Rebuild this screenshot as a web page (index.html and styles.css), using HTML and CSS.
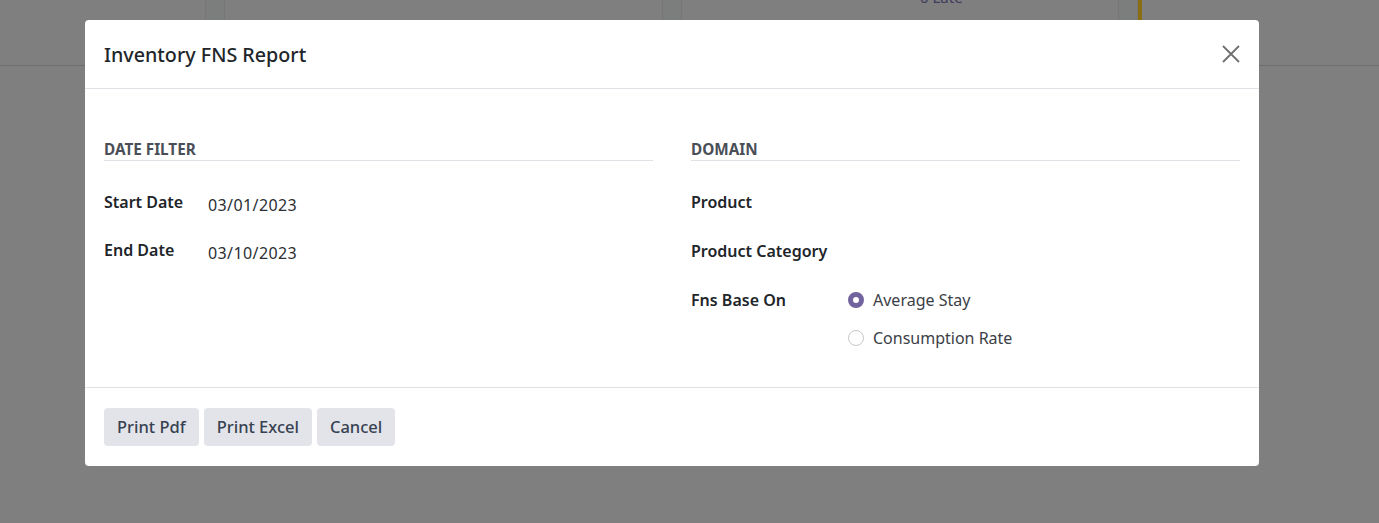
FILE: index.html
```html
<!DOCTYPE html>
<html>
<head>
<meta charset="utf-8">
<link rel="stylesheet" href="styles.css">
</head>
<body>
<div class="page">
  <div class="strip">
    <div class="cell c1"></div>
    <div class="gutter"></div>
    <div class="cell c2"></div>
    <div class="gutter"></div>
    <div class="cell c3"><span class="late">0 Late</span></div>
    <div class="gutter"></div>
    <div class="gold"></div>
    <div class="cell c4"></div>
  </div>
</div>

<div class="modal">
  <header class="modal-header">
    <h4 class="modal-title">Inventory FNS Report</h4>
    <button class="close" aria-label="Close">
      <svg width="20" height="20" viewBox="0 0 20 20"><path d="M2 2 L18 18 M18 2 L2 18" stroke="#6f6f6f" stroke-width="1.8" fill="none"/></svg>
    </button>
  </header>
  <main class="modal-body">
    <section class="group">
      <div class="group-title">Date Filter</div>
      <div class="rows rows-left">
        <div class="row"><div class="label lbl-left">Start Date</div><div class="value">03/01/2023</div></div>
        <div class="row"><div class="label lbl-left">End Date</div><div class="value">03/10/2023</div></div>
      </div>
    </section>
    <section class="group">
      <div class="group-title">Domain</div>
      <div class="rows rows-right">
        <div class="row"><div class="label lbl-right">Product</div></div>
        <div class="row"><div class="label lbl-right">Product Category</div></div>
        <div class="row"><div class="label lbl-right">Fns Base On</div>
          <div class="radios">
            <div class="radio-item"><span class="radio checked"></span><span>Average Stay</span></div>
            <div class="radio-item"><span class="radio"></span><span>Consumption Rate</span></div>
          </div>
        </div>
      </div>
    </section>
  </main>
  <footer class="modal-footer">
    <button class="btn">Print Pdf</button>
    <button class="btn">Print Excel</button>
    <button class="btn">Cancel</button>
  </footer>
</div>
</body>
</html>
```

FILE: styles.css
```css
html, body {
  margin: 0;
  padding: 0;
}
body {
  width: 1379px;
  height: 523px;
  background: #7f7f7f;
  font-family: "Noto Sans", "Open Sans", sans-serif;
  overflow: hidden;
}
.page {
  height: 523px;
}
.strip {
  display: flex;
  height: 65px;
  border-bottom: 1px solid #6e6e6e;
}
.cell {
  background: #7f7f7f;
}
.c1 { width: 205px; }
.c2 { width: 437px; }
.c3 { width: 436px; position: relative; }
.c4 { flex: 1; }
.gutter {
  width: 18px;
  background: #7b7e7d;
  border-left: 1px solid #777;
  border-right: 1px solid #777;
}
.gold {
  width: 4px;
  background: #8a6d10;
}
.late {
  position: absolute;
  top: -13px;
  left: 238px;
  font-size: 15px;
  color: #3d3b5c;
}

.modal {
  position: absolute;
  left: 85px;
  top: 20px;
  width: 1174px;
  height: 446px;
  background: #fff;
  border-radius: 4px;
  display: flex;
  flex-direction: column;
  color: #212529;
}
.modal-header {
  height: 69px;
  box-sizing: border-box;
  border-bottom: 1px solid #dee2e6;
  display: flex;
  align-items: center;
  justify-content: space-between;
  padding: 0 18px 0 19px;
}
.modal-title {
  margin: 0;
  font-size: 19.7px;
  font-weight: 500;
  color: #212529;
  line-height: 24px;
  padding-top: 1px;
}
.close {
  border: 0;
  background: transparent;
  padding: 0;
  width: 20px;
  height: 20px;
  display: flex;
}
.modal-body {
  flex: 1;
  display: flex;
  gap: 38px;
  padding: 50px 19px 0 19px;
  border-bottom: 1px solid #dee2e6;
}
.group {
  flex: 1;
}
.group-title {
  font-size: 15.3px;
  font-weight: 700;
  text-transform: uppercase;
  color: #4a4f57;
  line-height: 20px;
  padding-bottom: 1px;
  border-bottom: 1px solid #dee2e6;
}
.rows {
  display: flex;
  flex-direction: column;
  margin-top: 29px;
}
.rows-left { gap: 21px; }
.rows-right { gap: 25px; }
.row {
  display: flex;
  align-items: flex-start;
  line-height: 24px;
}
.label {
  font-size: 16px;
  font-weight: 600;
  color: #212529;
}
.lbl-left { width: 104px; }
.lbl-right { width: 157px; }
.value {
  font-size: 16px;
  letter-spacing: 0.4px;
  color: #2b2f33;
  margin-top: 3px;
}
.radios {
  display: flex;
  flex-direction: column;
  gap: 14px;
}
.radio-item {
  display: flex;
  align-items: center;
  gap: 9px;
  font-size: 16px;
  color: #3c4046;
  line-height: 24px;
}
.radio {
  width: 16px;
  height: 16px;
  box-sizing: border-box;
  border-radius: 50%;
  border: 1px solid #c8c8c8;
  background: #fff;
}
.radio.checked {
  border: 5px solid #71639e;
  background: #fff;
}
.modal-footer {
  height: 78px;
  box-sizing: border-box;
  display: flex;
  align-items: center;
  gap: 5px;
  padding: 0 19px;
}
.btn {
  height: 38px;
  border: 0;
  border-radius: 4px;
  background: #e2e4e9;
  color: #374151;
  font-family: "Noto Sans", "Open Sans", sans-serif;
  font-size: 16.5px;
  font-weight: 500;
  padding: 0 13px 1px;
}
```
